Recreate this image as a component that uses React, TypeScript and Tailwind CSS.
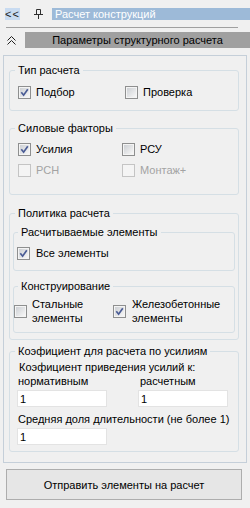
import React from "react";

function Check({ checked = false, disabled = false }: { checked?: boolean; disabled?: boolean }) {
  return (
    <span
      className={
        disabled
          ? "w-[13px] h-[13px] shrink-0 border border-[#c4c4c4] bg-[#f4f4f4] flex items-center justify-center"
          : "w-[13px] h-[13px] shrink-0 border border-[#8e8f8f] bg-[#f4f4f4] p-[1px] flex"
      }
    >
      {!disabled && (
        <span className="flex-1 bg-gradient-to-br from-[#cdd0d4] to-[#f7f7f7] flex items-center justify-center">
          {checked && (
            <svg width="9" height="9" viewBox="0 0 9 9">
              <path d="M1.3 4.3 L3.6 7.2 L7.8 1.2" fill="none" stroke="#4a5c95" strokeWidth="1.7" />
            </svg>
          )}
        </span>
      )}
    </span>
  );
}

function Group({
  title,
  className,
  legendClass,
  children,
}: {
  title: string;
  className: string;
  legendClass: string;
  children: React.ReactNode;
}) {
  return (
    <fieldset className={className}>
      <legend className={legendClass}>{title}</legend>
      {children}
    </fieldset>
  );
}

export default function App() {
  return (
    <div className="w-[250px] h-[508px] bg-[#f0f0f0] text-[11px] leading-[14px] text-black font-['Liberation_Sans',Arial,sans-serif] overflow-hidden">
      {/* top bar */}
      <div className="flex items-center h-[12px] mt-[8px]">
        <div className="ml-[5px] w-[15px] h-[12px] bg-[#c8dbf1] flex items-center justify-center text-[11px] leading-[12px] text-[#1a1a1a] tracking-[1px]">
          &lt;&lt;
        </div>
        <svg className="ml-[14px]" width="10" height="10" viewBox="0 0 10 10">
          <path d="M2.5 0.5 H6.5 V5.5 M2.5 0.5 V5.5 M0 5.5 H9 M4.5 5.5 V10" fill="none" stroke="#303030" strokeWidth="1" />
        </svg>
        <div className="ml-[8px] flex-1 h-[12px] bg-[#9dbad8] text-white pl-[3px] flex items-center whitespace-nowrap">
          Расчет конструкций
        </div>
      </div>
      <div className="mt-[7px] ml-[6px] w-[232px] h-px bg-[#a0a0a0]" />
      {/* section header */}
      <div className="flex items-center mt-[4px] h-[16px]">
        <svg className="ml-[7px]" width="9" height="9" viewBox="0 0 9 9">
          <path d="M0.5 4.5 L4.5 0.5 L8.5 4.5 M0.5 8.5 L4.5 4.5 L8.5 8.5" fill="none" stroke="#202020" strokeWidth="1" />
        </svg>
        <div className="ml-[9px] flex-1 h-[16px] bg-[#a0a0a0] flex items-center justify-center whitespace-nowrap">
          Параметры структурного расчета
        </div>
      </div>
      {/* panel */}
      <div className="mt-[7px] ml-[3px] w-[244px] h-[408px] border border-[#c5cfd9] pl-[5px] pr-[7px] pt-[7px]">
        <Group
          title="Тип расчета"
          className="border border-[#d5dfe5] rounded-[3px] pb-[11px]"
          legendClass="ml-[5px] px-[3px]"
        >
          <div className="flex mt-[8px] pl-[8px] h-[14px] items-center">
            <div className="w-[107px] flex items-center gap-[5px]">
              <Check checked />
              <span>Подбор</span>
            </div>
            <div className="flex items-center gap-[5px]">
              <Check />
              <span>Проверка</span>
            </div>
          </div>
        </Group>

        <Group
          title="Силовые факторы"
          className="mt-[10px] border border-[#d5dfe5] rounded-[3px] pb-[17px]"
          legendClass="ml-[5px] px-[3px]"
        >
          <div className="mt-[7px] pl-[8px] flex flex-col gap-[7px]">
            <div className="flex h-[14px] items-center">
              <div className="w-[104px] flex items-center gap-[5px]">
                <Check checked />
                <span>Усилия</span>
              </div>
              <div className="flex items-center gap-[5px]">
                <Check />
                <span>РСУ</span>
              </div>
            </div>
            <div className="flex h-[14px] items-center text-[#a3a3a3]">
              <div className="w-[104px] flex items-center gap-[5px]">
                <Check disabled />
                <span>РСН</span>
              </div>
              <div className="flex items-center gap-[5px]">
                <Check disabled />
                <span>Монтаж+</span>
              </div>
            </div>
          </div>
        </Group>

        <Group
          title="Политика расчета"
          className="mt-[11px] border border-[#d5dfe5] rounded-[3px] pl-[3px] pr-[3px] pb-[6px]"
          legendClass="ml-[2px] px-[3px]"
        >
          <Group
            title="Расчитываемые элементы"
            className="mt-[5px] border border-[#d5dfe5] rounded-[3px] pb-[10px]"
            legendClass="ml-[4px] px-[3px]"
          >
            <div className="mt-[7px] pl-[3px] flex h-[14px] items-center gap-[6px]">
              <Check checked />
              <span>Все элементы</span>
            </div>
          </Group>
          <Group
            title="Конструирование"
            className="mt-[8px] border border-[#d5dfe5] rounded-[3px] pb-[7px]"
            legendClass="ml-[4px] px-[3px]"
          >
            <div className="mt-[4px] flex">
              <div className="w-[99px] flex items-center gap-[5px]">
                <Check />
                <span>
                  Стальные
                  <br />
                  элементы
                </span>
              </div>
              <div className="flex items-center gap-[6px]">
                <Check checked />
                <span>
                  Железобетонные
                  <br />
                  элементы
                </span>
              </div>
            </div>
          </Group>
        </Group>

        <Group
          title="Коэфициент для расчета по усилиям"
          className="mt-[4px] border border-[#d5dfe5] rounded-[3px] pl-[7px] pb-[6px]"
          legendClass="ml-[-2px] px-[3px]"
        >
          <div className="mt-[2px] ml-[2px] whitespace-nowrap">Коэфициент приведения усилий к:</div>
          <div className="flex">
            <div className="w-[121px] flex flex-col">
              <span className="ml-[1px]">нормативным</span>
              <div className="mt-[2px] w-[90px] h-[17px] bg-white border border-[#e3e3e3] pl-[2px] flex items-center">1</div>
            </div>
            <div className="flex flex-col">
              <span className="ml-[2px]">расчетным</span>
              <div className="mt-[2px] w-[90px] h-[17px] bg-white border border-[#e3e3e3] pl-[2px] flex items-center">1</div>
            </div>
          </div>
          <div className="mt-[5px] ml-[1px] whitespace-nowrap">Средняя доля длительности (не более 1)</div>
          <div className="mt-[2px] w-[90px] h-[17px] bg-white border border-[#e3e3e3] pl-[2px] flex items-center">1</div>
        </Group>
      </div>
      <button className="mt-[6px] ml-[6px] w-[236px] h-[31px] border border-[#adadad] bg-[#e6e6e6] flex items-center justify-center">
        Отправить элементы на расчет
      </button>
    </div>
  );
}
